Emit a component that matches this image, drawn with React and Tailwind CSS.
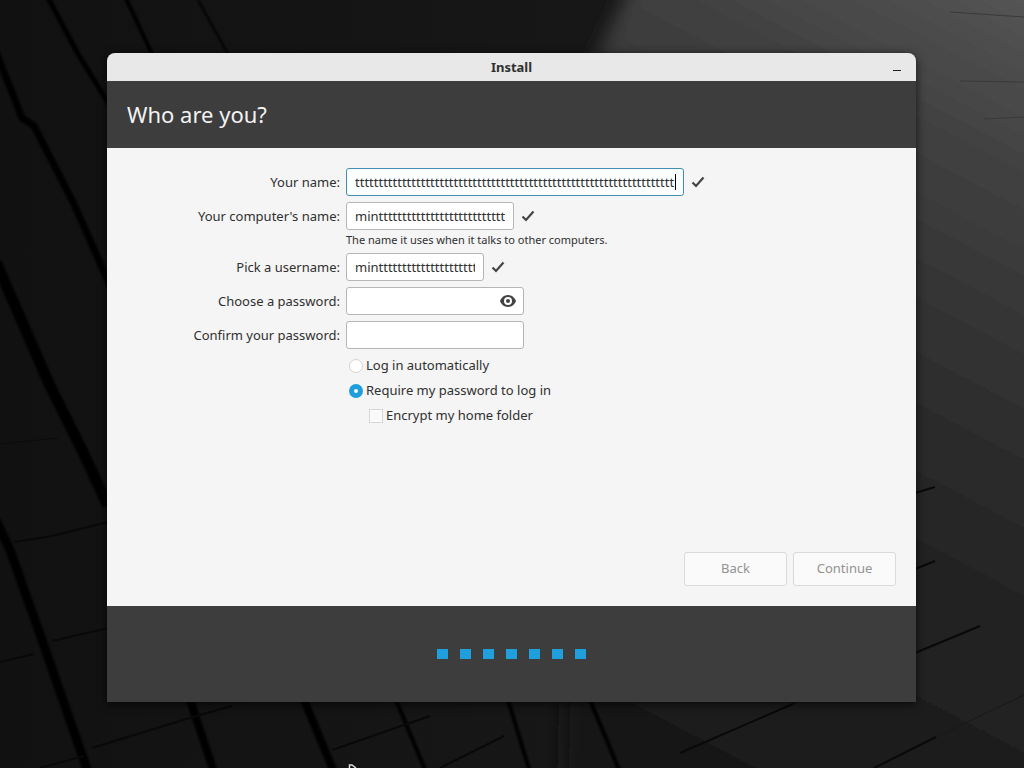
const NAME = 't'.repeat(68);
const HOST = `min${'t'.repeat(60)}`;

const fieldClass =
  'h-7 rounded-[3px] border border-[#b6b6b6] bg-white px-2 text-[13px] text-[#303030] outline-none';

function Wallpaper() {
  return (
    <svg
      className="absolute inset-0 h-full w-full"
      viewBox="0 0 1024 768"
      preserveAspectRatio="xMidYMid slice"
      aria-hidden="true"
    >
      <defs>
        <linearGradient id="dark" x1="0" y1="0" x2="1" y2="0">
          <stop offset="0" stopColor="#111111" />
          <stop offset="0.45" stopColor="#161616" />
          <stop offset="1" stopColor="#1a1a1a" />
        </linearGradient>
        <linearGradient id="slab" gradientUnits="userSpaceOnUse" x1="1020" y1="0" x2="620" y2="760">
          <stop offset="0" stopColor="#545454" />
          <stop offset="0.18" stopColor="#414141" />
          <stop offset="0.41" stopColor="#303030" />
          <stop offset="0.62" stopColor="#242424" />
          <stop offset="0.79" stopColor="#1f1f1f" />
          <stop offset="1" stopColor="#171717" />
        </linearGradient>
        <filter id="soft" filterUnits="userSpaceOnUse" x="500" y="-100" width="700" height="1100">
          <feGaussianBlur stdDeviation="9" />
        </filter>
        <filter id="edge" filterUnits="userSpaceOnUse" x="-20" y="-20" width="1064" height="808">
          <feGaussianBlur stdDeviation="1" />
        </filter>
      </defs>
      <rect width="1024" height="768" fill="url(#dark)" />
      <path d="M638 -30 L1100 -30 L1100 900 L560 900 L580 90 Z" fill="url(#slab)" filter="url(#soft)" />
      <g fill="none" stroke="#060606" filter="url(#edge)">
        <path d="M46 -6 L78 54 L110 106" strokeWidth="5" />
        <path d="M124 -6 L152 54" strokeWidth="4" />
        <path d="M198 0 L228 54" strokeWidth="2" />
        <path d="M-4 52 L22 118 L34 126 L74 204 L112 290" strokeWidth="7" />
        <path d="M-4 262 L50 386 L82 450 L108 506" strokeWidth="11" />
        <path d="M-4 520 L10 550 L42 640 L88 772" strokeWidth="9" />
        <path d="M190 700 L214 772" strokeWidth="8" />
        <path d="M304 700 L334 772" strokeWidth="8" />
        <path d="M396 700 L426 772 M508 700 L530 772 M590 700 L620 772" strokeWidth="4" />
      </g>
      <g fill="none" stroke="#090909" strokeWidth="2">
        <path d="M0 444 L58 438" strokeWidth="1" stroke="#0c0c0c" />
        <path d="M14 542 L52 536 L108 522 M52 641 L108 628 M0 662 L34 654" />
        <path d="M92 748 L196 716 L232 706 M40 768 L84 756" />
        <path d="M332 750 L430 716 M440 768 L504 736" />
        <path d="M680 753 L795 703 M915 493 L935 487 M915 569 L935 561 M915 653 L980 626" />
        <path d="M874 768 L936 737" />
        <path d="M936 737 L1024 695" strokeWidth="1" stroke="#191919" />
      </g>
      <g fill="none" stroke="#3a3a3a">
        <path d="M950 12 L1024 17 M960 81 L1024 82 M984 119 L1024 117" />
      </g>
    </svg>
  );
}

function Check() {
  return (
    <svg className="h-3 w-3.5" viewBox="0 0 14 12" aria-hidden="true">
      <path d="M1.5 6.5 L5 10 L12.5 1.5" fill="none" stroke="#444" strokeWidth="2.2" />
    </svg>
  );
}

function Eye() {
  return (
    <svg className="h-3 w-4" viewBox="0 0 16 12" aria-hidden="true">
      <path
        fillRule="evenodd"
        fill="#444"
        d="M8 0 C4 0 1.2 2.8 0 6 C1.2 9.2 4 12 8 12 C12 12 14.8 9.2 16 6 C14.8 2.8 12 0 8 0 Z M8 2 A4 4 0 1 1 8 10 A4 4 0 1 1 8 2 Z"
      />
      <circle cx="8" cy="6" r="2" fill="#444" />
    </svg>
  );
}

function Label({ htmlFor, children }) {
  return (
    <label htmlFor={htmlFor} className="self-start pt-1 text-right leading-5 whitespace-nowrap">
      {children}
    </label>
  );
}

function AccountForm() {
  return (
    <div>
      <div className="grid grid-cols-[213px_1fr] gap-1.5">
        <Label htmlFor="name">Your name:</Label>
        <div className="flex items-center gap-[7px]">
          <div className="relative">
            <input
              id="name"
              defaultValue={NAME}
              className="block h-7 w-[338px] rounded-[3px] border border-[#3f8fae] bg-[#fbffff] px-2 text-[13px] text-[#303030] outline-none"
            />
            <span className="absolute top-1.5 right-2 h-4 w-px bg-black" />
          </div>
          <Check />
        </div>

        <Label htmlFor="host">Your computer's name:</Label>
        <div>
          <div className="flex items-center gap-[7px]">
            <input id="host" defaultValue={HOST} className={`${fieldClass} w-[168px]`} />
            <Check />
          </div>
          <p className="mt-0.5 text-[11px] leading-[15px]">The name it uses when it talks to other computers.</p>
        </div>

        <Label htmlFor="username">Pick a username:</Label>
        <div className="flex items-center gap-[7px]">
          <input id="username" defaultValue={HOST} className={`${fieldClass} w-[138px]`} />
          <Check />
        </div>

        <Label htmlFor="password">Choose a password:</Label>
        <div className="relative w-[178px]">
          <input id="password" type="password" className={`${fieldClass} block w-full`} />
          <button type="button" aria-label="Show password" className="absolute top-2 right-2">
            <Eye />
          </button>
        </div>

        <Label htmlFor="confirm">Confirm your password:</Label>
        <input id="confirm" type="password" className={`${fieldClass} w-[178px]`} />
      </div>

      <div className="mt-1 ml-[222px]">
        <label className="flex h-[25px] items-center gap-[3px]">
          <input
            type="radio"
            name="login"
            className="h-3.5 w-3.5 appearance-none rounded-full border border-[#d4d4d4] bg-white"
          />
          Log in automatically
        </label>
        <label className="flex h-[25px] items-center gap-[3px]">
          <input
            type="radio"
            name="login"
            defaultChecked
            className="h-3.5 w-3.5 appearance-none rounded-full border-5 border-[#1f9ede] bg-white"
          />
          Require my password to log in
        </label>
        <label className="ml-5 flex h-[25px] items-center gap-[3px]">
          <input type="checkbox" className="h-3.5 w-3.5 appearance-none border border-[#d8d8d8] bg-[#fafafa]" />
          Encrypt my home folder
        </label>
      </div>
    </div>
  );
}

export default function App() {
  const buttonClass =
    'h-[34px] w-[103px] rounded-[3px] border border-[#dadada] bg-[#fafafa] text-[13px] text-[#929292]';

  return (
    <div className="relative flex min-h-screen flex-col overflow-hidden bg-[#141414] pt-[53px] pr-[108px] pb-[66px] pl-[107px] font-['Noto_Sans',sans-serif] text-[13px] text-[#303030]">
      <Wallpaper />
      <div className="relative flex flex-1 flex-col rounded-t-lg shadow-[0_2px_10px_rgba(0,0,0,0.7)]">
        <div className="grid h-7 grid-cols-[1fr_auto_1fr] items-center rounded-t-lg bg-[#e8e8e8] px-3.5">
          <h1 className="col-start-2 leading-7 font-bold">Install</h1>
          <button type="button" aria-label="Minimize" className="flex h-4 w-2.5 items-end justify-center justify-self-end pb-1">
            <span className="h-px w-2 bg-[#202020]" />
          </button>
        </div>
        <div className="flex h-[67px] items-center bg-[#3d3d3d] px-5">
          <h2 className="text-[22px] text-[#f2f2f2]">Who are you?</h2>
        </div>
        <main className="flex flex-1 flex-col justify-between bg-[#f5f5f5] p-5">
          <AccountForm />
          <div className="flex justify-end gap-1.5">
            <button type="button" disabled className={buttonClass}>
              Back
            </button>
            <button type="button" disabled className={buttonClass}>
              Continue
            </button>
          </div>
        </main>
        <div className="flex h-24 items-center justify-center gap-3 bg-[#3d3d3d]">
          {Array.from({ length: 7 }, (_, i) => (
            <span key={i} className="h-2.5 w-[11px] bg-[#209fdd]" />
          ))}
        </div>
      </div>
      <svg className="absolute bottom-0 left-[348px] h-1 w-2.5" viewBox="0 0 10 4" aria-hidden="true">
        <path d="M1.5 4 V1 L4 1 L8 4" fill="#111" stroke="#ddd" strokeWidth="1.5" />
      </svg>
    </div>
  );
}
